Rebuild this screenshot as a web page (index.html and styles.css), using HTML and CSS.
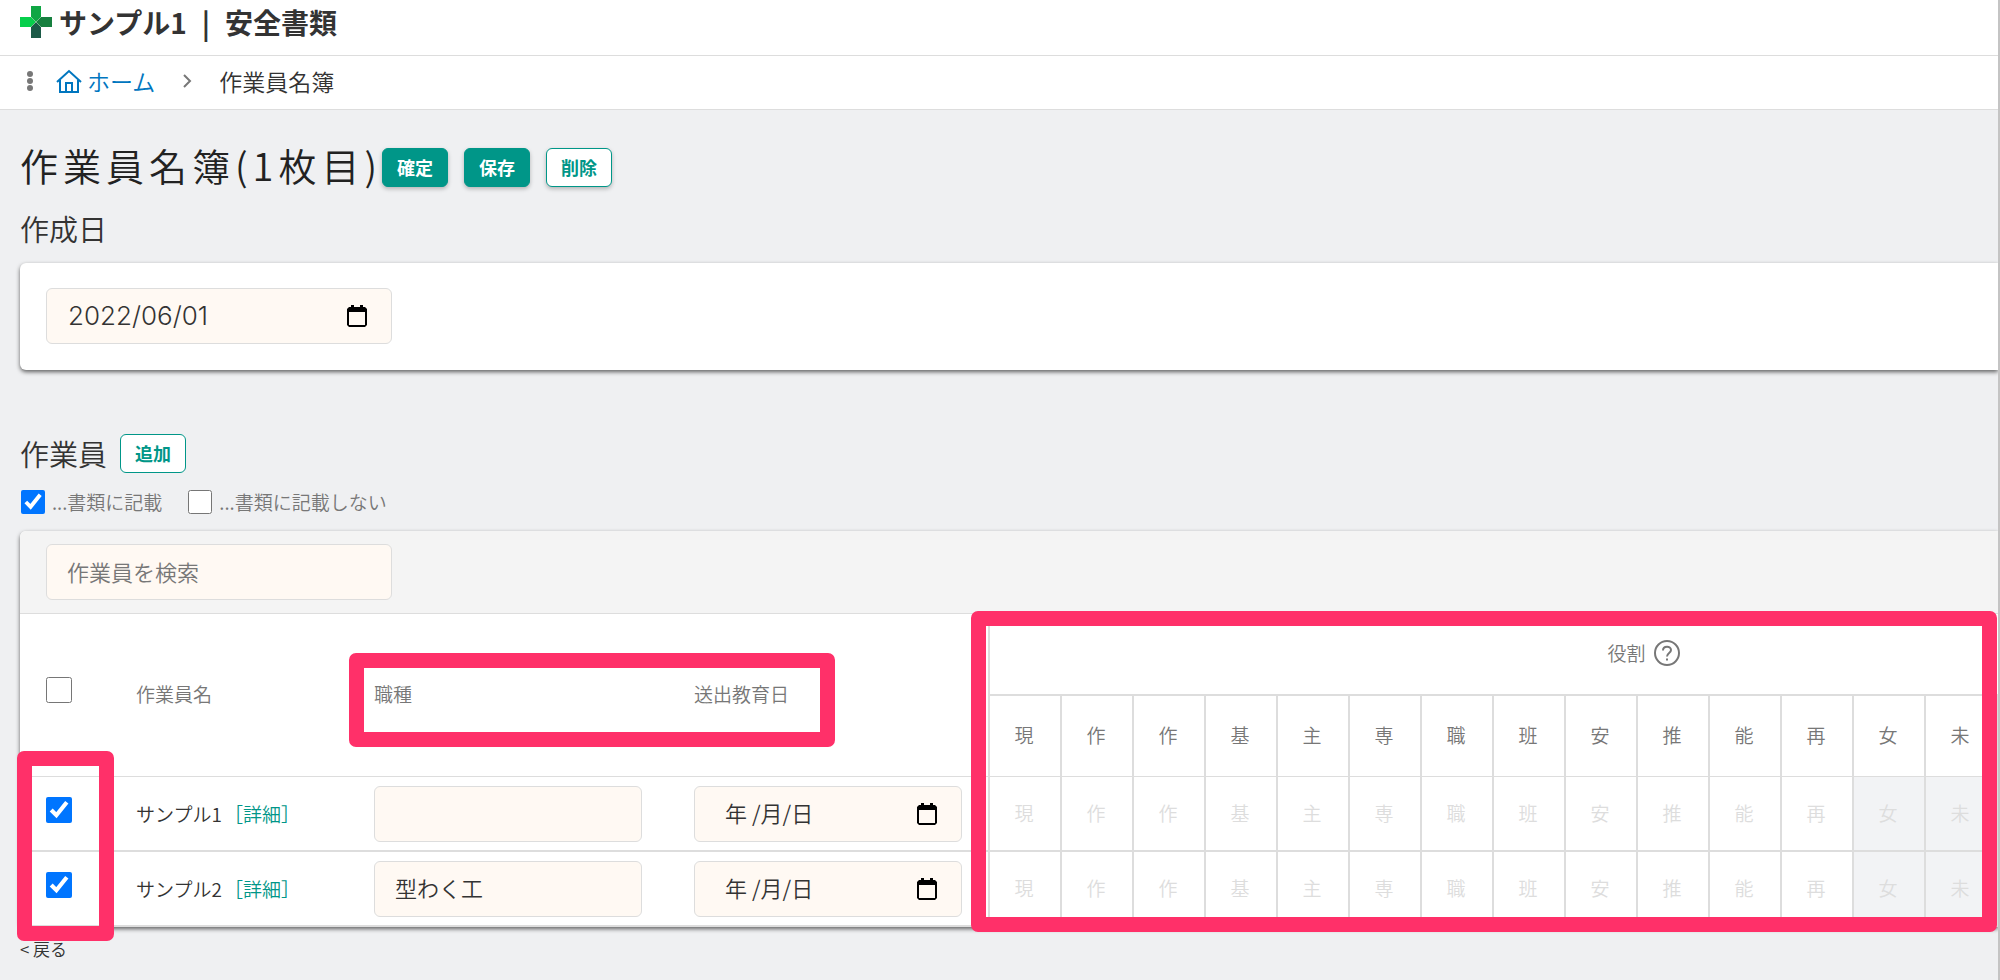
FILE: index.html
```html
<!DOCTYPE html>
<html lang="ja">
<head>
    <meta charset="UTF-8">
    <meta name="viewport" content="width=device-width, initial-scale=1.0">
    <title>作業員名簿</title>
    <link rel="stylesheet" href="styles.css">
</head>
<body>
    <header class="header">
        <svg class="logo" viewBox="0 0 32 32" aria-hidden="true">
            <path d="M11 0h10v11l-5 5-5-5z" fill="#0fa644"/>
            <path d="M0 11h11l5 5-5 5H0z" fill="#06cf4b"/>
            <path d="M32 11H21l-5 5 5 5h11z" fill="#16803f"/>
            <path d="M11 32h10V21l-5-5-5 5z" fill="#1b5a47"/>
            <path d="M11 11l10 10M21 11L11 21" stroke="#8fc9a0" stroke-width="0.6"/>
        </svg>
        <div class="header-title"><span>サンプル1</span><span>|</span><span>安全書類</span></div>
    </header>

    <nav class="breadcrumb">
        <svg class="icon-dots" viewBox="0 0 6 20" aria-hidden="true">
            <circle cx="3" cy="3" r="3"/><circle cx="3" cy="10" r="3"/><circle cx="3" cy="17" r="3"/>
        </svg>
        <a class="home" href="#">
            <svg class="icon-home" viewBox="0 0 26 24" aria-hidden="true">
                <path d="M1 13L13 2l12 11M4 11v12h18V11M10 23v-9h6v9"/>
            </svg>
            ホーム
        </a>
        <svg class="icon-chevron" viewBox="0 0 10 14" aria-hidden="true"><path d="M2 1l6 6-6 6"/></svg>
        <span>作業員名簿</span>
    </nav>

    <main class="main">
        <div class="title-row">
            <h1>作業員名簿(1枚目)</h1>
            <div class="buttons">
                <button class="btn btn-primary" type="button">確定</button>
                <button class="btn btn-primary" type="button">保存</button>
                <button class="btn" type="button">削除</button>
            </div>
        </div>

        <h2><label for="created">作成日</label></h2>
        <section class="card date-card">
            <div class="field">
                <input class="input input-date" id="created" type="text" value="2022/06/01">
                <button class="calendar" type="button" aria-label="日付を選択">
                    <svg viewBox="0 0 20 22"><path d="M2 2h2V0h3v2h6V0h3v2h2l2 2v16l-2 2H2l-2-2V4zM2 7v13h16V7z"/></svg>
                </button>
            </div>
        </section>

        <div class="worker-row">
            <h2>作業員</h2>
            <button class="btn btn-flat" type="button">追加</button>
        </div>
        <div class="legend">
            <label><input class="check" type="checkbox" checked>...書類に記載</label>
            <label><input class="check" type="checkbox">...書類に記載しない</label>
        </div>

        <section class="card worker-card">
            <div class="worker-scroll">
                <div class="search">
                    <input class="input" type="text" placeholder="作業員を検索" aria-label="作業員を検索">
                </div>
                <table class="workers">
                    <colgroup>
                        <col class="col-check"><col class="col-name"><col class="col-job"><col class="col-date">
                        <col class="col-role" span="17"><col class="col-last">
                    </colgroup>
                    <thead>
                        <tr class="head-top">
                            <th rowspan="2"><input class="check check-lg" type="checkbox" aria-label="すべて選択"></th>
                            <th rowspan="2">作業員名</th>
                            <th rowspan="2">職種</th>
                            <th rowspan="2">送出教育日</th>
                            <th class="role-title" colspan="18">
                                <span class="role-label">役割
                                    <svg class="icon-help" viewBox="0 0 26 26" aria-hidden="true">
                                        <circle cx="13" cy="13" r="12"/>
                                        <path d="M9 10.500c0-5 8-5 8-.5 0 3-4 3-4 6.500"/>
                                        <path d="M13 18.500v2"/>
                                    </svg>
                                </span>
                            </th>
                        </tr>
                        <tr class="head-roles">
                            <th class="role">現</th><th class="role">作</th><th class="role">作</th><th class="role">基</th>
                            <th class="role">主</th><th class="role">専</th><th class="role">職</th><th class="role">班</th>
                            <th class="role">安</th><th class="role">推</th><th class="role">能</th><th class="role">再</th>
                            <th class="role">女</th><th class="role">未</th><th class="role" colspan="4"></th>
                        </tr>
                    </thead>
                    <tbody>
                        <tr>
                            <td><input class="check check-lg" type="checkbox" checked aria-label="サンプル1"></td>
                            <td>サンプル1<a class="detail" href="#">［詳細］</a></td>
                            <td><input class="input" type="text" aria-label="職種"></td>
                            <td>
                                <div class="field">
                                    <input class="input input-empty" type="text" value="年 /月/日" aria-label="送出教育日">
                                    <button class="calendar" type="button" aria-label="日付を選択">
                                        <svg viewBox="0 0 20 22"><path d="M2 2h2V0h3v2h6V0h3v2h2l2 2v16l-2 2H2l-2-2V4zM2 7v13h16V7z"/></svg>
                                    </button>
                                </div>
                            </td>
                            <td class="role">現</td><td class="role">作</td><td class="role">作</td><td class="role">基</td>
                            <td class="role">主</td><td class="role">専</td><td class="role">職</td><td class="role">班</td>
                            <td class="role">安</td><td class="role">推</td><td class="role">能</td><td class="role">再</td>
                            <td class="role off">女</td><td class="role off">未</td><td class="role" colspan="4"></td>
                        </tr>
                        <tr>
                            <td><input class="check check-lg" type="checkbox" checked aria-label="サンプル2"></td>
                            <td>サンプル2<a class="detail" href="#">［詳細］</a></td>
                            <td><input class="input" type="text" value="型わく工" aria-label="職種"></td>
                            <td>
                                <div class="field">
                                    <input class="input input-empty" type="text" value="年 /月/日" aria-label="送出教育日">
                                    <button class="calendar" type="button" aria-label="日付を選択">
                                        <svg viewBox="0 0 20 22"><path d="M2 2h2V0h3v2h6V0h3v2h2l2 2v16l-2 2H2l-2-2V4zM2 7v13h16V7z"/></svg>
                                    </button>
                                </div>
                            </td>
                            <td class="role">現</td><td class="role">作</td><td class="role">作</td><td class="role">基</td>
                            <td class="role">主</td><td class="role">専</td><td class="role">職</td><td class="role">班</td>
                            <td class="role">安</td><td class="role">推</td><td class="role">能</td><td class="role">再</td>
                            <td class="role off">女</td><td class="role off">未</td><td class="role" colspan="4"></td>
                        </tr>
                    </tbody>
                </table>
            </div>
            <!-- 説明用の赤枠 -->
            <div class="mark mark-check"></div>
            <div class="mark mark-fields"></div>
            <div class="mark mark-roles"></div>
        </section>

        <a class="back" href="#">&lt; 戻る</a>
    </main>
</body>
</html>
```

FILE: styles.css
```css
* {
    box-sizing: border-box;
}

body {
    margin: 0;
    min-height: 100vh;
    background: #eff0f2;
    border-right: 2px solid #c4c4c4;
    font-family: "Noto Sans CJK JP", sans-serif;
    font-weight: 350;
    font-size: 19px;
    color: #333;
}

a {
    text-decoration: none;
}

/* ヘッダー */
.header {
    display: flex;
    align-items: center;
    gap: 7px;
    height: 56px;
    padding: 0 20px 12px;
    background: #fff;
    border-bottom: 1px solid #ddd;
}

.logo {
    width: 32px;
    height: 32px;
}

.header-title {
    display: flex;
    gap: 15px;
    font-size: 28px;
    font-weight: 700;
    line-height: 32px;
}

/* パンくず */
.breadcrumb {
    display: flex;
    align-items: center;
    height: 54px;
    padding: 0 27px 3px;
    background: #fff;
    border-bottom: 1px solid #ddd;
    font-size: 23px;
}

.icon-dots {
    width: 6px;
    height: 20px;
    margin-right: 23px;
    fill: #777;
}

.home {
    display: flex;
    align-items: center;
    gap: 5px;
    color: #0076bf;
}

.icon-home {
    width: 26px;
    height: 24px;
    fill: none;
    stroke: #0076bf;
    stroke-width: 2;
}

.icon-chevron {
    width: 10px;
    height: 14px;
    margin: 0 27px;
    fill: none;
    stroke: #777;
    stroke-width: 2;
}

.main {
    padding: 31px 0 0 20px;
}

h1, h2 {
    margin: 0;
    font-weight: 350;
}

h1 {
    padding-bottom: 4px;
    font-size: 38px;
    line-height: 48px;
    letter-spacing: 5px;
    color: #222;
}

h2 {
    font-size: 29px;
    line-height: 40px;
}

.title-row {
    display: flex;
    align-items: center;
    margin-bottom: 15px;
}

.buttons {
    display: flex;
    gap: 16px;
}

.btn {
    height: 39px;
    padding: 0 14px;
    border: 1px solid #009688;
    border-radius: 6px;
    background: #fff;
    color: #009688;
    font: 700 18px "Noto Sans CJK JP", sans-serif;
    line-height: 34px;
    box-shadow: 0 2px 4px rgba(0, 0, 0, 0.25);
}

.btn-primary {
    background: #009688;
    color: #fff;
}

.btn-flat {
    box-shadow: none;
}

/* カード */
.card {
    position: relative;
    background: #fff;
    border-radius: 6px 0 0 6px;
    box-shadow: 0 2px 4px rgba(0, 0, 0, 0.6);
}

.date-card {
    margin: 15px 0 63px;
    padding: 25px 26px 26px;
}

.field {
    position: relative;
    width: 346px;
}

.input {
    display: block;
    width: 346px;
    height: 56px;
    padding: 0 20px 3px;
    border: 1px solid #ddd;
    border-radius: 6px;
    background: #fff9f3;
    color: #333;
    font: 350 22px "Noto Sans CJK JP", sans-serif;
}

.input::placeholder {
    color: #777;
}

.input-date {
    padding: 0 21px 2px;
    font: 300 26px Inter, sans-serif;
}

.input-empty {
    padding-left: 30px;
}

.calendar {
    position: absolute;
    top: 17px;
    right: 25px;
    width: 20px;
    height: 22px;
    padding: 0;
    border: 0;
    background: none;
}

.calendar svg {
    display: block;
    width: 20px;
    height: 22px;
    fill: #000;
    fill-rule: evenodd;
}

/* 作業員 */
.worker-row {
    display: flex;
    align-items: center;
    gap: 13px;
}

.legend {
    display: flex;
    gap: 25px;
    margin: 15px 0 15px;
    line-height: 28px;
    color: #777;
}

.legend label {
    display: flex;
    align-items: center;
    gap: 7px;
}

.check {
    width: 24px;
    height: 24px;
    margin: 0 0 0 1px;
    accent-color: #0075ff;
}

.check-lg {
    display: block;
    width: 26px;
    height: 26px;
    margin: 0 0 7px;
}

.worker-scroll {
    overflow: hidden;
    border-radius: 6px 0 0 0;
}

.search {
    padding: 13px 26px;
    background: #f4f4f4;
    border-bottom: 1px solid #ddd;
}

.workers {
    width: 2277px;
    table-layout: fixed;
    border-collapse: separate;
    border-spacing: 0;
}

.col-check { width: 90px; }
.col-name { width: 238px; }
.col-job { width: 320px; }
.col-date { width: 320px; }
.col-role { width: 72px; }
.col-last { width: 85px; }

.workers th,
.workers td {
    padding: 0 26px;
    border-bottom: 2px solid #ddd;
    text-align: left;
    font-weight: 350;
    white-space: nowrap;
}

.workers th {
    padding-bottom: 3px;
    border-bottom-width: 1px;
    color: #777;
}

.workers td {
    height: 75px;
}

.workers .input,
.workers .field {
    width: 268px;
}

.detail {
    margin-left: 2px;
    color: #009688;
}

.workers .role-title {
    height: 82px;
    border-left: 2px solid #ddd;
    border-bottom-width: 2px;
}

.role-label {
    display: flex;
    align-items: center;
    justify-content: center;
    gap: 8px;
}

.icon-help {
    width: 26px;
    height: 26px;
    fill: none;
    stroke: #777;
    stroke-width: 2;
}

.workers .role {
    padding: 0 2px 3px 0;
    border-left: 2px solid #ddd;
    text-align: center;
}

.workers th.role {
    height: 81px;
}

.workers td.role {
    color: #ddd;
}

.workers td.off {
    background: #f2f3f5;
}

/* 赤枠 */
.mark {
    position: absolute;
    border: 15px solid #ff3069;
    border-radius: 7px;
    pointer-events: none;
}

.mark-check {
    top: 220px;
    left: -3px;
    width: 97px;
    height: 190px;
}

.mark-fields {
    top: 122px;
    left: 329px;
    width: 486px;
    height: 94px;
}

.mark-roles {
    top: 80px;
    left: 951px;
    right: 1px;
    height: 321px;
}

.back {
    display: inline-block;
    margin-top: 9px;
    color: #333;
    font-size: 17px;
}
```
